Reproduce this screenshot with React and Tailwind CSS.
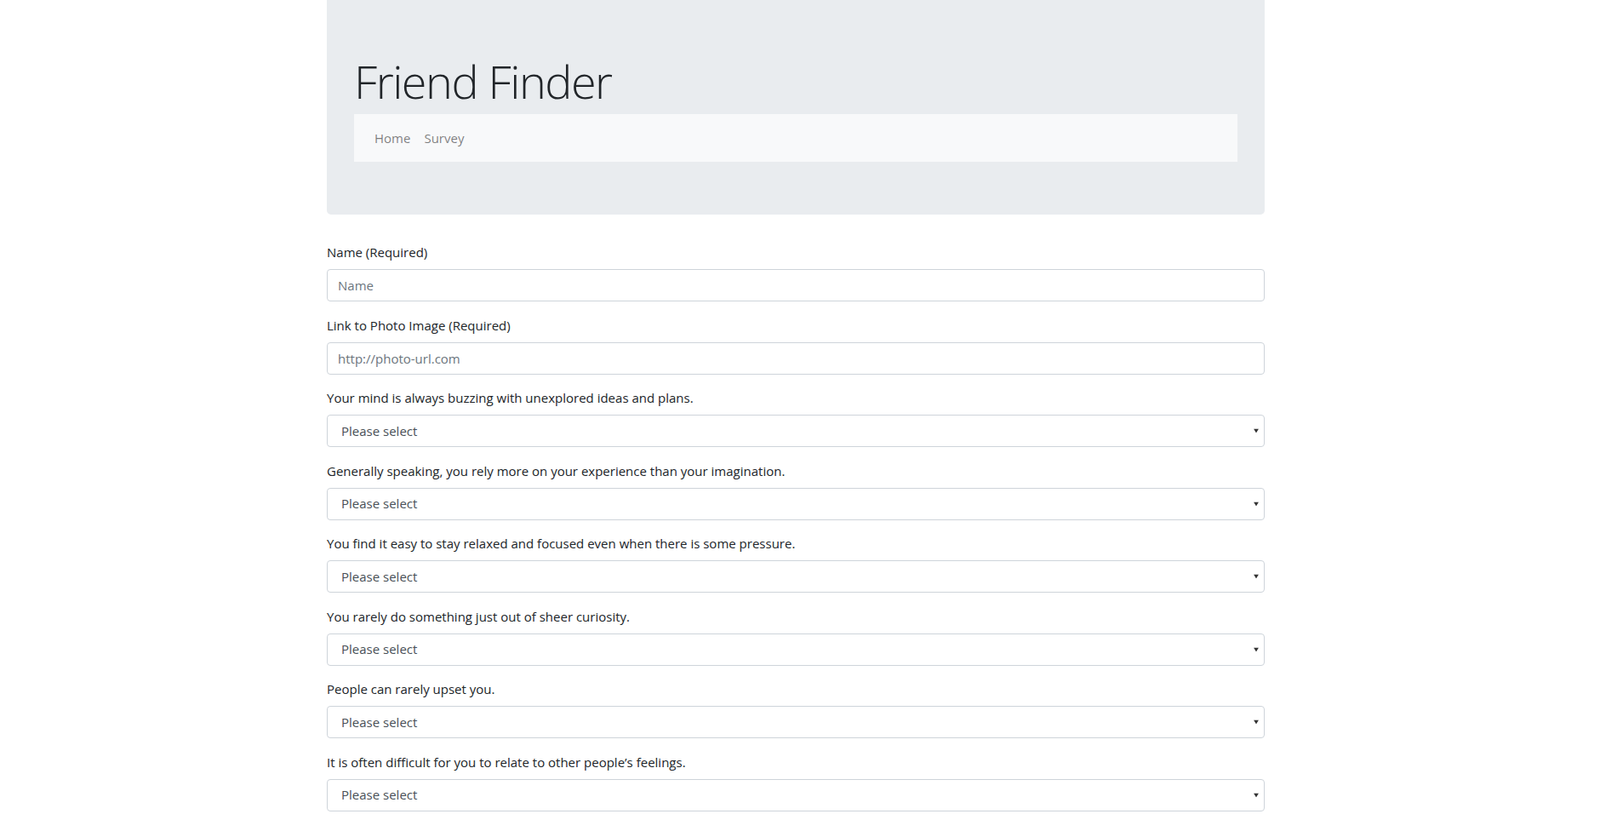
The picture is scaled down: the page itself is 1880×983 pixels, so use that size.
import React from 'react';

const QUESTIONS = [
  'Your mind is always buzzing with unexplored ideas and plans.',
  'Generally speaking, you rely more on your experience than your imagination.',
  'You find it easy to stay relaxed and focused even when there is some pressure.',
  'You rarely do something just out of sheer curiosity.',
  'People can rarely upset you.',
  "It is often difficult for you to relate to other people\u2019s feelings.",
];

const FONT = { fontFamily: '"Segoe UI", "Open Sans", "Noto Sans", sans-serif' };

function Field({ label, placeholder }) {
  return (
    <div className="mb-[15.5px]">
      <label className="block mb-2 text-[15px] leading-6 text-[#212529]">{label}</label>
      <input
        type="text"
        placeholder={placeholder}
        className="block w-full h-[38px] px-3 rounded border border-[#ced4da] bg-white text-[15px] text-[#495057] placeholder:text-[#6c757d] outline-none"
        style={FONT}
      />
    </div>
  );
}

function SelectField({ label }) {
  return (
    <div className="mb-[15.5px]">
      <label className="block mb-2 text-[15px] leading-6 text-[#212529]">{label}</label>
      <div className="relative">
        <select
          defaultValue=""
          className="block w-full h-[38px] pl-4 pr-8 rounded border border-[#ced4da] bg-white text-[15px] text-[#495057] appearance-none outline-none"
          style={FONT}
        >
          <option value="">Please select</option>
          <option>1 (Strongly Disagree)</option>
          <option>2</option>
          <option>3</option>
          <option>4</option>
          <option>5 (Strongly Agree)</option>
        </select>
        {/* native-looking arrow */}
        <svg className="absolute right-[7px] top-1/2 -translate-y-1/2 w-[6px] h-[5px] pointer-events-none" viewBox="0 0 6 5">
          <path d="M0 0h6L3 5z" fill="#333" />
        </svg>
      </div>
    </div>
  );
}

export default function App() {
  return (
    <div className="min-h-screen bg-white" style={FONT}>
      <div className="w-[1102px] ml-[384px]">
        {/* Jumbotron */}
        <div className="bg-[#e9ecef] rounded-b-[5px] px-8 pt-[62px] pb-[62px] mb-8">
          <h1 className="text-[54px] leading-[67px] font-light tracking-[-1.5px] text-[#212529] mb-[5px]">Friend Finder</h1>
          <nav className="h-[56px] bg-[#f8f9fa] px-4 flex items-center">
            <a href="#" className="px-2 text-[15px] text-black/50">Home</a>
            <a href="#" className="px-2 text-[15px] text-black/50">Survey</a>
          </nav>
        </div>

        <form>
          <Field label="Name (Required)" placeholder="Name" />
          <Field label="Link to Photo Image (Required)" placeholder="http://photo-url.com" />
          {QUESTIONS.map(q => (
            <SelectField key={q} label={q} />
          ))}
        </form>
      </div>
    </div>
  );
}
